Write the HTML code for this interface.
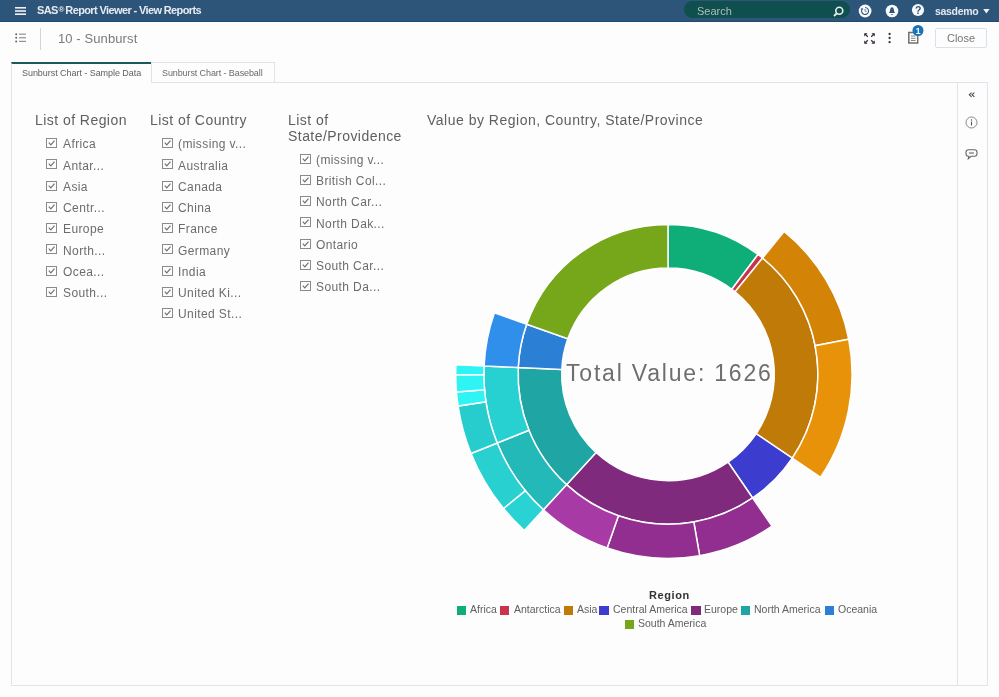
<!DOCTYPE html>
<html><head><meta charset="utf-8">
<style>
*{box-sizing:border-box;margin:0;padding:0}
html,body{width:999px;height:697px;overflow:hidden;background:#fdfdfd;font-family:"Liberation Sans",sans-serif;position:relative}
.abs{position:absolute;will-change:transform}
#topbar{left:0;top:0;width:999px;height:22px;background:#2d5479;border-bottom:1px solid #204a72}
#title{left:37px;top:4px;color:#e6ebf1;font-size:11px;font-weight:bold;white-space:nowrap;letter-spacing:-0.62px}
#search{left:684px;top:1px;width:166px;height:17px;border-radius:9px;background:#0f4f4e}
#search span{position:absolute;left:13px;top:3.5px;font-size:11px;color:#aebdbd}
#user{left:935px;top:4.5px;color:#e3e8ee;font-size:10.5px;font-weight:bold;letter-spacing:-0.3px}
.txt{white-space:nowrap;color:#666}
.h{font-size:14px;color:#5f5f5f;letter-spacing:0.45px}
.item{font-size:12px;color:#6c6c6c;letter-spacing:0.4px}
.cb{position:absolute;width:10.5px;height:10px;border:1px solid #8a8a8a;background:#fdfdfd}
.cb svg{position:absolute;left:0;top:0}
.leg{font-size:10.5px;color:#606060}
.sw{position:absolute;width:9.4px;height:9.2px}
</style></head><body>
<div id="topbar" class="abs">
  <svg class="abs" style="left:15px;top:7px" width="12" height="8"><rect x="0" y="0" width="11" height="1.6" fill="#f0f0f5"/><rect x="0" y="3.2" width="11" height="1.6" fill="#f0f0f5"/><rect x="0" y="6.4" width="11" height="1.6" fill="#f0f0f5"/></svg>
  <div id="title" class="abs">SAS<span style="font-size:8px;position:relative;top:-2.5px;margin-left:0.8px;margin-right:1.5px">®</span>Report Viewer - View Reports</div>
  <div id="search" class="abs"><span>Search</span>
    <svg class="abs" style="left:148.5px;top:4.5px" width="11" height="11"><circle cx="6.3" cy="4.7" r="3.5" fill="none" stroke="#e8eef0" stroke-width="1.6"/><line x1="3.7" y1="7.3" x2="1" y2="10" stroke="#e8eef0" stroke-width="1.8"/></svg>
  </div>
  <svg class="abs" style="left:858px;top:3.5px" width="14" height="14"><circle cx="7.1" cy="7" r="6.4" fill="#f8f9fb"/><path d="M7.1 3.5 A3.5 3.5 0 1 1 4 5.3" fill="none" stroke="#2d5479" stroke-width="1.05"/><path d="M3 4.2 L5.4 4.6 L3.8 6.6Z" fill="#2d5479"/><path d="M7.1 5 V7.3 H8.6" fill="none" stroke="#5b7a99" stroke-width="0.9"/></svg>
  <svg class="abs" style="left:885px;top:3.5px" width="14" height="14"><circle cx="7" cy="7" r="6.3" fill="#f8f9fb"/><path d="M3.8 9 Q5 8 5.2 5.5 Q5.4 3.2 7 3.2 Q8.6 3.2 8.8 5.5 Q9 8 10.2 9Z" fill="#2d5479"/><path d="M5.6 10 H8.4 L7 11Z" fill="#2d5479"/></svg>
  <svg class="abs" style="left:911px;top:3.3px" width="14" height="14"><circle cx="7" cy="7" r="6.1" fill="#f8f9fb"/><text x="7.1" y="10.6" text-anchor="middle" font-family="Liberation Sans" font-weight="bold" font-size="10.5" fill="#2d5479">?</text></svg>
  <div id="user" class="abs">sasdemo</div>
  <svg class="abs" style="left:983px;top:8.5px" width="8" height="6"><path d="M0.2 0 L6.6 0 L3.4 4.4Z" fill="#eef1f5"/></svg>
</div>
<!-- toolbar -->
<svg class="abs" style="left:15px;top:33px" width="12" height="10"><circle cx="1.2" cy="1.2" r="1" fill="#666"/><circle cx="1.2" cy="4.8" r="1" fill="#666"/><circle cx="1.2" cy="8.4" r="1" fill="#666"/><rect x="4" y="0.6" width="7" height="1.1" fill="#888"/><rect x="4" y="4.2" width="7" height="1.1" fill="#888"/><rect x="4" y="7.8" width="7" height="1.1" fill="#888"/></svg>
<div class="abs" style="left:40px;top:28px;width:1px;height:22px;background:#d6d6d6"></div>
<div class="abs txt" style="left:58px;top:31px;font-size:13px;color:#7a7a7a;letter-spacing:0.1px">10 - Sunburst</div>
<svg class="abs" style="left:863px;top:32px" width="13" height="13"><g stroke="#3d2d3d" stroke-width="1.25" fill="none"><path d="M2 2 L4.8 4.8 M11 2 L8.2 4.8 M2 11 L4.8 8.2 M11 11 L8.2 8.2"/></g><g fill="#3d2d3d"><path d="M1.2 1.2 L4.6 1.2 L1.2 4.6Z M11.8 1.2 L11.8 4.6 L8.4 1.2Z M1.2 11.8 L1.2 8.4 L4.6 11.8Z M11.8 11.8 L8.4 11.8 L11.8 8.4Z"/></g></svg>
<svg class="abs" style="left:887px;top:32px" width="5" height="12"><circle cx="2.6" cy="2" r="1.15" fill="#3d2d3d"/><circle cx="2.6" cy="6" r="1.15" fill="#3d2d3d"/><circle cx="2.6" cy="10.2" r="1.15" fill="#3d2d3d"/></svg>
<svg class="abs" style="left:906px;top:23px" width="20" height="22"><path d="M2.8 9.6 L9.8 9.6 L11.7 11.5 L11.7 20 L2.8 20Z" fill="#fdfdfd" stroke="#707070" stroke-width="1.5"/><g stroke="#6a6a6a" stroke-width="0.8"><line x1="5" y1="13" x2="9.5" y2="13"/><line x1="5" y1="15.3" x2="9.5" y2="15.3"/><line x1="5" y1="17.5" x2="9.5" y2="17.5"/></g><circle cx="12" cy="7.5" r="5.5" fill="#1a73b9"/><text x="12" y="10.7" text-anchor="middle" font-family="Liberation Sans" font-weight="bold" font-size="8.5" fill="#fff">1</text></svg>
<div class="abs" style="left:935px;top:28px;width:52px;height:20px;border:1px solid #d9e1e8;border-radius:2px;background:#fdfdfd"></div>
<div class="abs txt" style="left:935px;top:32px;width:52px;text-align:center;font-size:11px;color:#777">Close</div>
<!-- tabs -->
<div class="abs" style="left:11px;top:62px;width:141px;height:21px;border-left:1px solid #e2e6ea;border-top:2px solid #1d5958;background:#fdfdfd"></div>
<div class="abs txt" style="left:22px;top:68px;font-size:9px;color:#606060;letter-spacing:-0.05px">Sunburst Chart - Sample Data</div>
<div class="abs" style="left:151px;top:62px;width:124px;height:21px;border:1px solid #dde3e8;background:#fdfdfd"></div>
<div class="abs txt" style="left:162px;top:68px;font-size:9px;color:#6a6a6a;letter-spacing:-0.1px">Sunburst Chart - Baseball</div>
<!-- content panel -->
<div class="abs" style="left:151px;top:82px;width:837px;height:1px;background:#dde3e8"></div>
<div class="abs" style="left:11px;top:82px;width:1px;height:604px;background:#e4e4e4"></div>
<div class="abs" style="left:11px;top:685px;width:977px;height:1px;background:#e4e4e4"></div>
<div class="abs" style="left:987px;top:82px;width:1px;height:604px;background:#dde4ee"></div>
<div class="abs" style="left:957px;top:82px;width:1px;height:604px;background:#e4e4e4"></div>
<!-- side icons -->
<svg class="abs" style="left:968px;top:92px" width="8" height="6"><path d="M3.6 0.6 L1.3 2.7 L3.6 4.8 M6.4 0.6 L4.1 2.7 L6.4 4.8" fill="none" stroke="#4a4a4a" stroke-width="1.1"/></svg>
<svg class="abs" style="left:965px;top:116px" width="13" height="13"><circle cx="6.5" cy="6.5" r="5.5" fill="none" stroke="#7a7a7a" stroke-width="0.9"/><circle cx="6.5" cy="4" r="0.75" fill="#555"/><rect x="5.95" y="5.6" width="1.1" height="3.9" fill="#555"/></svg>
<svg class="abs" style="left:964px;top:148px" width="15" height="14"><path d="M4.5 1.8 H10.5 Q13 1.8 13 4.3 V5.8 Q13 8.3 10.5 8.3 H7 L4.3 10.8 L4.8 8.3 H4.5 Q2 8.3 2 5.8 V4.3 Q2 1.8 4.5 1.8Z" fill="none" stroke="#666" stroke-width="1.1"/><line x1="5" y1="5" x2="10" y2="5" stroke="#666" stroke-width="1.1"/></svg>
<div class="abs txt h" style="left:35px;top:112.0px">List of Region</div>
<div class="cb" style="left:46px;top:138.0px"><svg width="11" height="11"><path d="M1.8 3.7 L3.8 5.8 L7.5 1.6" fill="none" stroke="#6e6e6e" stroke-width="1.15"/></svg></div>
<div class="abs txt item" style="left:63px;top:137.2px">Africa</div>
<div class="cb" style="left:46px;top:159.3px"><svg width="11" height="11"><path d="M1.8 3.7 L3.8 5.8 L7.5 1.6" fill="none" stroke="#6e6e6e" stroke-width="1.15"/></svg></div>
<div class="abs txt item" style="left:63px;top:158.5px">Antar...</div>
<div class="cb" style="left:46px;top:180.5px"><svg width="11" height="11"><path d="M1.8 3.7 L3.8 5.8 L7.5 1.6" fill="none" stroke="#6e6e6e" stroke-width="1.15"/></svg></div>
<div class="abs txt item" style="left:63px;top:179.7px">Asia</div>
<div class="cb" style="left:46px;top:201.8px"><svg width="11" height="11"><path d="M1.8 3.7 L3.8 5.8 L7.5 1.6" fill="none" stroke="#6e6e6e" stroke-width="1.15"/></svg></div>
<div class="abs txt item" style="left:63px;top:201.0px">Centr...</div>
<div class="cb" style="left:46px;top:223.1px"><svg width="11" height="11"><path d="M1.8 3.7 L3.8 5.8 L7.5 1.6" fill="none" stroke="#6e6e6e" stroke-width="1.15"/></svg></div>
<div class="abs txt item" style="left:63px;top:222.3px">Europe</div>
<div class="cb" style="left:46px;top:244.3px"><svg width="11" height="11"><path d="M1.8 3.7 L3.8 5.8 L7.5 1.6" fill="none" stroke="#6e6e6e" stroke-width="1.15"/></svg></div>
<div class="abs txt item" style="left:63px;top:243.5px">North...</div>
<div class="cb" style="left:46px;top:265.6px"><svg width="11" height="11"><path d="M1.8 3.7 L3.8 5.8 L7.5 1.6" fill="none" stroke="#6e6e6e" stroke-width="1.15"/></svg></div>
<div class="abs txt item" style="left:63px;top:264.8px">Ocea...</div>
<div class="cb" style="left:46px;top:286.9px"><svg width="11" height="11"><path d="M1.8 3.7 L3.8 5.8 L7.5 1.6" fill="none" stroke="#6e6e6e" stroke-width="1.15"/></svg></div>
<div class="abs txt item" style="left:63px;top:286.1px">South...</div>
<div class="abs txt h" style="left:150px;top:112.0px">List of Country</div>
<div class="cb" style="left:162px;top:138.0px"><svg width="11" height="11"><path d="M1.8 3.7 L3.8 5.8 L7.5 1.6" fill="none" stroke="#6e6e6e" stroke-width="1.15"/></svg></div>
<div class="abs txt item" style="left:178px;top:137.2px">(missing v...</div>
<div class="cb" style="left:162px;top:159.3px"><svg width="11" height="11"><path d="M1.8 3.7 L3.8 5.8 L7.5 1.6" fill="none" stroke="#6e6e6e" stroke-width="1.15"/></svg></div>
<div class="abs txt item" style="left:178px;top:158.5px">Australia</div>
<div class="cb" style="left:162px;top:180.5px"><svg width="11" height="11"><path d="M1.8 3.7 L3.8 5.8 L7.5 1.6" fill="none" stroke="#6e6e6e" stroke-width="1.15"/></svg></div>
<div class="abs txt item" style="left:178px;top:179.7px">Canada</div>
<div class="cb" style="left:162px;top:201.8px"><svg width="11" height="11"><path d="M1.8 3.7 L3.8 5.8 L7.5 1.6" fill="none" stroke="#6e6e6e" stroke-width="1.15"/></svg></div>
<div class="abs txt item" style="left:178px;top:201.0px">China</div>
<div class="cb" style="left:162px;top:223.1px"><svg width="11" height="11"><path d="M1.8 3.7 L3.8 5.8 L7.5 1.6" fill="none" stroke="#6e6e6e" stroke-width="1.15"/></svg></div>
<div class="abs txt item" style="left:178px;top:222.3px">France</div>
<div class="cb" style="left:162px;top:244.3px"><svg width="11" height="11"><path d="M1.8 3.7 L3.8 5.8 L7.5 1.6" fill="none" stroke="#6e6e6e" stroke-width="1.15"/></svg></div>
<div class="abs txt item" style="left:178px;top:243.5px">Germany</div>
<div class="cb" style="left:162px;top:265.6px"><svg width="11" height="11"><path d="M1.8 3.7 L3.8 5.8 L7.5 1.6" fill="none" stroke="#6e6e6e" stroke-width="1.15"/></svg></div>
<div class="abs txt item" style="left:178px;top:264.8px">India</div>
<div class="cb" style="left:162px;top:286.9px"><svg width="11" height="11"><path d="M1.8 3.7 L3.8 5.8 L7.5 1.6" fill="none" stroke="#6e6e6e" stroke-width="1.15"/></svg></div>
<div class="abs txt item" style="left:178px;top:286.1px">United Ki...</div>
<div class="cb" style="left:162px;top:308.2px"><svg width="11" height="11"><path d="M1.8 3.7 L3.8 5.8 L7.5 1.6" fill="none" stroke="#6e6e6e" stroke-width="1.15"/></svg></div>
<div class="abs txt item" style="left:178px;top:307.4px">United St...</div>
<div class="abs txt h" style="left:288px;top:112.0px">List of</div>
<div class="abs txt h" style="left:288px;top:127.5px">State/Providence</div>
<div class="cb" style="left:300px;top:153.5px"><svg width="11" height="11"><path d="M1.8 3.7 L3.8 5.8 L7.5 1.6" fill="none" stroke="#6e6e6e" stroke-width="1.15"/></svg></div>
<div class="abs txt item" style="left:316px;top:152.7px">(missing v...</div>
<div class="cb" style="left:300px;top:174.8px"><svg width="11" height="11"><path d="M1.8 3.7 L3.8 5.8 L7.5 1.6" fill="none" stroke="#6e6e6e" stroke-width="1.15"/></svg></div>
<div class="abs txt item" style="left:316px;top:174.0px">British Col...</div>
<div class="cb" style="left:300px;top:196.0px"><svg width="11" height="11"><path d="M1.8 3.7 L3.8 5.8 L7.5 1.6" fill="none" stroke="#6e6e6e" stroke-width="1.15"/></svg></div>
<div class="abs txt item" style="left:316px;top:195.2px">North Car...</div>
<div class="cb" style="left:300px;top:217.3px"><svg width="11" height="11"><path d="M1.8 3.7 L3.8 5.8 L7.5 1.6" fill="none" stroke="#6e6e6e" stroke-width="1.15"/></svg></div>
<div class="abs txt item" style="left:316px;top:216.5px">North Dak...</div>
<div class="cb" style="left:300px;top:238.6px"><svg width="11" height="11"><path d="M1.8 3.7 L3.8 5.8 L7.5 1.6" fill="none" stroke="#6e6e6e" stroke-width="1.15"/></svg></div>
<div class="abs txt item" style="left:316px;top:237.8px">Ontario</div>
<div class="cb" style="left:300px;top:259.9px"><svg width="11" height="11"><path d="M1.8 3.7 L3.8 5.8 L7.5 1.6" fill="none" stroke="#6e6e6e" stroke-width="1.15"/></svg></div>
<div class="abs txt item" style="left:316px;top:259.1px">South Car...</div>
<div class="cb" style="left:300px;top:281.1px"><svg width="11" height="11"><path d="M1.8 3.7 L3.8 5.8 L7.5 1.6" fill="none" stroke="#6e6e6e" stroke-width="1.15"/></svg></div>
<div class="abs txt item" style="left:316px;top:280.3px">South Da...</div>
<div class="abs txt h" style="left:427px;top:112px;letter-spacing:0.5px">Value by Region, Country, State/Province</div>
<svg class="abs" style="left:0;top:0" width="999" height="697">
<g stroke="#fff" stroke-width="1.5" stroke-linejoin="miter"><path d="M668.00,224.40A149.9,149.9 0 0 1 758.00,254.43L731.82,289.29A106.3,106.3 0 0 0 668.00,268.00Z" fill="#0fae79"/><path d="M758.00,254.43A149.9,149.9 0 0 1 762.54,257.97L735.04,291.81A106.3,106.3 0 0 0 731.82,289.29Z" fill="#c9344d"/><path d="M762.54,257.97A149.9,149.9 0 0 1 792.27,458.12L756.13,433.74A106.3,106.3 0 0 0 735.04,291.81Z" fill="#c07a08"/><path d="M792.27,458.12A149.9,149.9 0 0 1 752.69,497.98L728.06,462.01A106.3,106.3 0 0 0 756.13,433.74Z" fill="#3c3cce"/><path d="M752.69,497.98A149.9,149.9 0 0 1 566.54,484.64L596.05,452.55A106.3,106.3 0 0 0 728.06,462.01Z" fill="#7f2a7d"/><path d="M566.54,484.64A149.9,149.9 0 0 1 518.25,367.50L561.81,369.48A106.3,106.3 0 0 0 596.05,452.55Z" fill="#1fa6a4"/><path d="M518.25,367.50A149.9,149.9 0 0 1 526.70,324.26L567.80,338.82A106.3,106.3 0 0 0 561.81,369.48Z" fill="#2b80d6"/><path d="M526.70,324.26A149.9,149.9 0 0 1 668.00,224.40L668.00,268.00A106.3,106.3 0 0 0 567.80,338.82Z" fill="#76a61a"/><path d="M784.11,231.43A184.1,184.1 0 0 1 848.72,339.17L815.15,345.70A149.9,149.9 0 0 0 762.54,257.97Z" fill="#d38406"/><path d="M848.72,339.17A184.1,184.1 0 0 1 820.63,477.25L792.27,458.12A149.9,149.9 0 0 0 815.15,345.70Z" fill="#e8920a"/><path d="M772.01,526.20A184.1,184.1 0 0 1 699.65,555.66L693.77,521.97A149.9,149.9 0 0 0 752.69,497.98Z" fill="#922e8f"/><path d="M699.65,555.66A184.1,184.1 0 0 1 607.15,548.05L618.46,515.78A149.9,149.9 0 0 0 693.77,521.97Z" fill="#922e8f"/><path d="M607.15,548.05A184.1,184.1 0 0 1 543.39,509.82L566.54,484.64A149.9,149.9 0 0 0 618.46,515.78Z" fill="#a83aa6"/><path d="M543.39,509.82A184.1,184.1 0 0 1 497.19,442.97L528.92,430.21A149.9,149.9 0 0 0 566.54,484.64Z" fill="#22b9b8"/><path d="M497.19,442.97A184.1,184.1 0 0 1 484.09,365.95L518.25,367.50A149.9,149.9 0 0 0 528.92,430.21Z" fill="#28d1d1"/><path d="M484.09,365.95A184.1,184.1 0 0 1 494.46,312.85L526.70,324.26A149.9,149.9 0 0 0 518.25,367.50Z" fill="#2f8fea"/><path d="M524.30,530.57A212.3,212.3 0 0 1 503.48,508.48L525.33,490.66A184.1,184.1 0 0 0 543.39,509.82Z" fill="#29d3d3"/><path d="M503.48,508.48A212.3,212.3 0 0 1 471.02,453.49L497.19,442.97A184.1,184.1 0 0 0 525.33,490.66Z" fill="#28d0d0"/><path d="M471.02,453.49A212.3,212.3 0 0 1 458.09,406.05L485.97,401.83A184.1,184.1 0 0 0 497.19,442.97Z" fill="#27cdcd"/><path d="M458.09,406.05A212.3,212.3 0 0 1 456.44,392.06L484.55,389.71A184.1,184.1 0 0 0 485.97,401.83Z" fill="#2ef4f4"/><path d="M456.44,392.06A212.3,212.3 0 0 1 455.70,374.67L483.90,374.62A184.1,184.1 0 0 0 484.55,389.71Z" fill="#2ef4f4"/><path d="M455.70,374.67A212.3,212.3 0 0 1 455.92,364.67L484.09,365.95A184.1,184.1 0 0 0 483.90,374.62Z" fill="#2ef4f4"/></g>

</svg>
<div class="abs txt" style="left:565.7px;top:360px;font-size:23px;color:#6e6e6e;letter-spacing:1.8px">Total Value: 1626</div>
<div class="abs txt" style="left:649px;top:589px;font-size:11px;font-weight:bold;color:#333;letter-spacing:0.6px">Region</div>
<div class="sw" style="left:456.8px;top:605.5px;background:#0fae79"></div>
<div class="abs txt leg" style="left:469.8px;top:603.3px">Africa</div>
<div class="sw" style="left:500px;top:605.5px;background:#c9344d"></div>
<div class="abs txt leg" style="left:513.5px;top:603.3px">Antarctica</div>
<div class="sw" style="left:563.7px;top:605.5px;background:#c07a08"></div>
<div class="abs txt leg" style="left:577px;top:603.3px">Asia</div>
<div class="sw" style="left:599.4px;top:605.5px;background:#3c3cce"></div>
<div class="abs txt leg" style="left:612.6px;top:603.3px">Central America</div>
<div class="sw" style="left:691.3px;top:605.5px;background:#7f2a7d"></div>
<div class="abs txt leg" style="left:704px;top:603.3px">Europe</div>
<div class="sw" style="left:740.6px;top:605.5px;background:#1fa6a4"></div>
<div class="abs txt leg" style="left:754px;top:603.3px">North America</div>
<div class="sw" style="left:825px;top:605.5px;background:#2b80d6"></div>
<div class="abs txt leg" style="left:838px;top:603.3px">Oceania</div>
<div class="sw" style="left:625px;top:619.5px;background:#76a61a"></div>
<div class="abs txt leg" style="left:638px;top:617.3px">South America</div>
</body></html>
